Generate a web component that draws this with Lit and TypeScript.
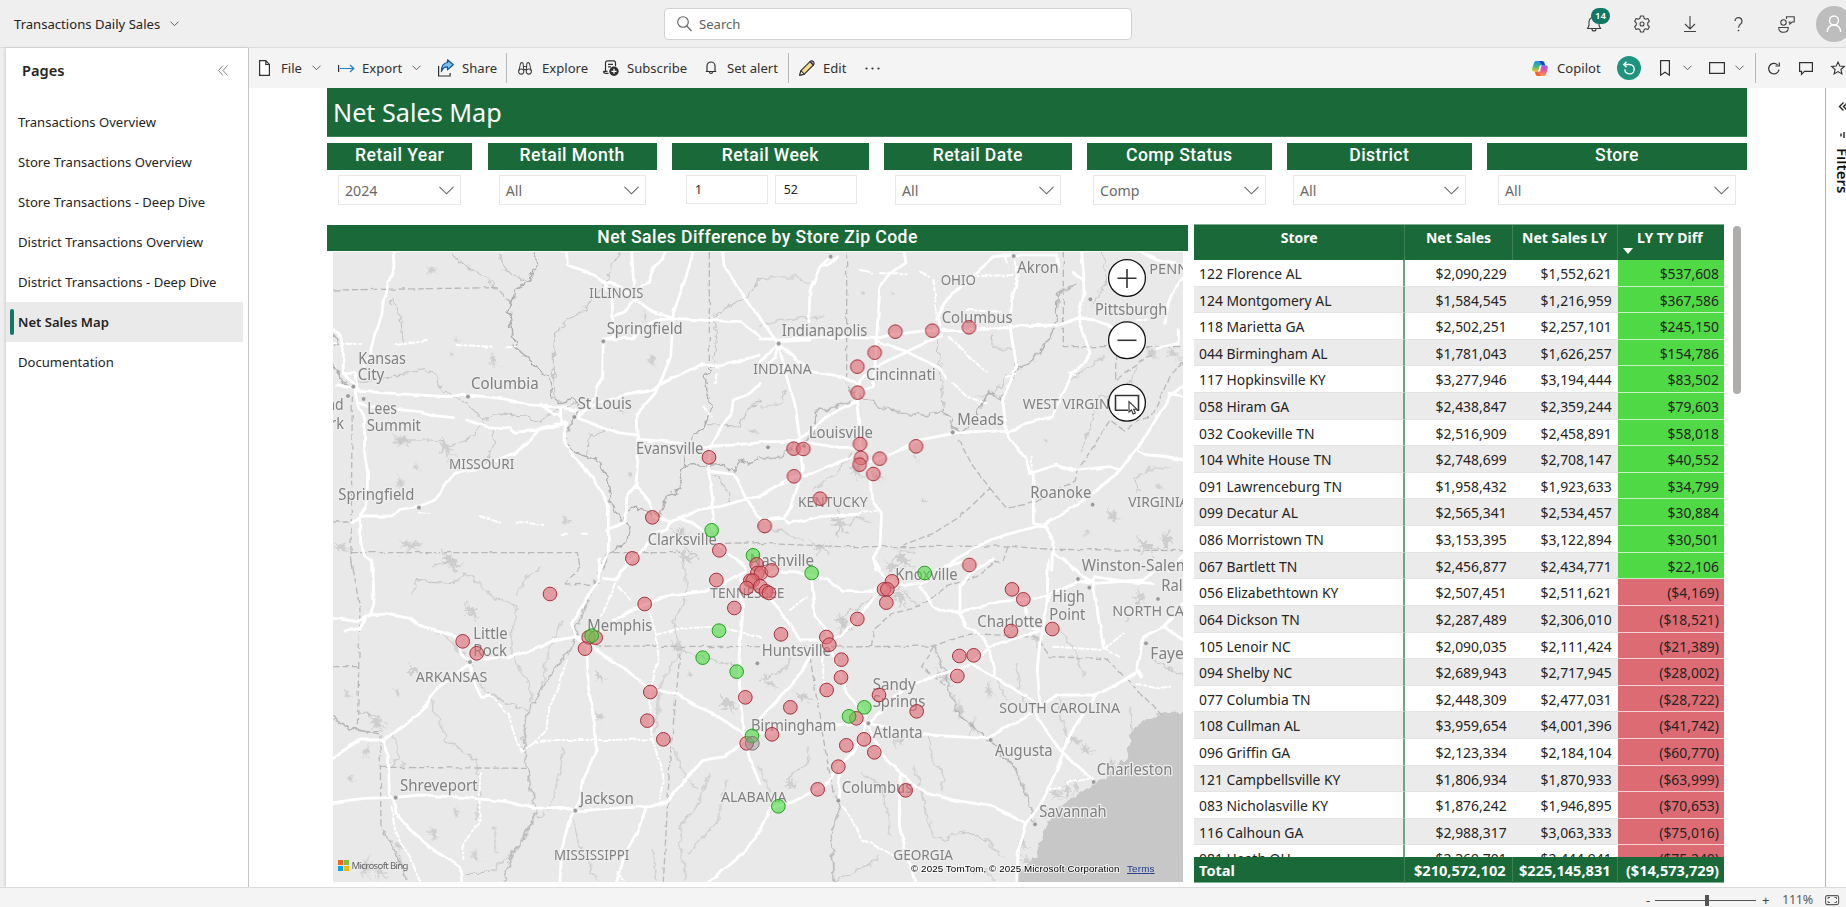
import { LitElement, html, css, svg } from "lit";
import { customElement } from "lit/decorators.js";

type Pt = [number, number];
/** text, x, baseline, rendered width, kind (c = city, s = state) */
type Label = [string, number, number, number, string];
interface Tile {
  x: number;
  y: number;
  roads: string;
  dotted: string;
  rivers: string;
  streams: string;
  borders: string;
  lakes: number[][];
  dots: Pt[];
  labels: Label[];
  red: Pt[];
  green: Pt[];
  gray?: Pt[];
}

/* Every tile is drawn on a grid three times finer than the page. */
const TILES: Tile[] = [
  {
    x: 320, y: 240,
    roads: `M220 36L222 80L205 130L190 180L185 230L165 280L155 320L150 350L105 415M40 268L62 290L70 330L70 400L100 432M70 400L105 400L112 450M50 438L100 442L130 455L270 463L380 470L430 465L500 470L560 478L620 494L700 500L770 510M105 450L115 500L134 540L134 640L143 700L140 800L122 825M730 548L660 565L625 605L580 640L520 665L460 690L405 700L370 740L345 780L300 798L240 808L215 828L130 828L95 848M122 825L122 910L135 950L158 965L160 990M660 492L700 522L722 530L722 508M722 530L722 548L740 555M120 487L150 498L230 508L300 515L345 527L400 533M440 540L500 560L570 565L580 577L640 572L700 560L740 548M740 36L742 75L800 95L850 125L875 165L878 225L880 290L850 300L848 410L830 440L825 470L780 530M850 297L935 295L960 270L1010 240L1060 235M935 36L940 110L943 180L915 215L885 228M1035 40L1000 85L985 125L940 150M850 125L900 140L945 180L1000 215L1060 235L1180 242L1260 245L1320 288M1120 40L1095 120L1060 220L1052 350L1020 430L1005 460L948 525L952 600L955 640L948 735L920 770L918 845L860 870M1208 36L1212 75L1270 170L1320 235M780 520L830 490L920 465L1000 450L1020 432L1140 375L1200 378L1260 362L1320 345M775 535L860 565L895 578L950 585L955 598L1040 605L1150 620L1240 615L1320 608M1320 430L1290 460L1240 480L1235 515L1200 570L1170 625L1165 690L1178 780L1180 870M1165 690L1240 700L1270 760L1290 800L1320 830M948 735L985 785L1000 830L1050 845L1080 835L1140 808L1200 800L1270 780L1320 768M735 545L735 610L760 650L800 690L840 750L865 800L865 930L850 970L840 990M1080 835L1120 850L1170 890L1230 945L1280 985M1050 845L1040 870L1000 880L970 930L930 965L910 990`,
    dotted: `M40 310L120 312M230 315L320 303M410 315L520 320M560 322L590 322M480 828L540 848M590 845L670 855M725 881L745 881M785 881L808 881M1188 400L1188 430M1150 500L1175 530M300 820L335 822`,
    rivers: `M645 36L650 75L625 125L585 145L580 180L568 210L570 250L585 320L640 370L685 410L695 470L720 485L760 475L775 500L765 530L740 580L740 610L770 640L830 660L865 710L870 780L905 840L930 860L920 910L880 930L850 960L840 990M1180 380L1155 400L1160 450L1172 510L1150 560L1110 600L1095 650L1090 680L1080 700L1085 750L1040 765L1020 830L960 805L930 805L905 845M1090 680L1140 675L1200 670L1240 695L1260 660L1290 670L1320 660M40 280L55 310L45 320M40 375L70 430L95 440`,
    streams: `M110 430L220 410L270 400L315 385L350 400L355 440L400 470L440 490L490 540L540 520L620 530L660 545L710 510L765 490M900 40L870 80L862 130L820 170L780 220L740 240L705 290L700 330L700 400L705 470M395 40L450 90L500 110L530 145M535 45L555 85L615 125M215 175L240 230L250 300M1320 120L1270 175L1180 230L1190 290L1180 370M490 545L455 590L400 615L330 600L230 600M520 570L520 620L490 680M880 560L805 590L800 650M1320 480L1270 530L1260 555L1150 550M1180 700L1230 760L1225 790M1080 850L1100 930L1140 960`,
    borders: `M40 150L530 143L570 185M1168 36L1168 380M97 470L93 938L100 990M92 938L772 938L780 985M40 846L95 846M880 938L1080 938M1215 910L1320 908`,
    lakes: [[335, 90, .8], [522, 362, .9], [245, 600, 1.2], [380, 625, 1.3], [290, 683, .6], [240, 730, .8], [270, 915, 1.3], [390, 960, 1.4], [740, 840, .7], [995, 360, .8], [975, 230, .7], [905, 510, .6], [1080, 880, 1.2], [1095, 950, 1.2], [1300, 575, .6], [930, 705, .4], [395, 340, .4], [412, 300, .4], [65, 920, 1]],
    dots: [[850, 304], [100, 440], [84, 468], [131, 477], [444, 470], [763, 531], [297, 803]],
    labels: [["ILLINOIS", 808, 175, 162, "s"], ["Springfield", 860, 282, 228, "c"], ["Kansas", 115, 372, 143, "c"], ["City", 113, 421, 80, "c"], ["Columbia", 453, 447, 203, "c"], ["St Louis", 773, 508, 163, "c"], ["Lees", 142, 521, 89, "c"], ["Summit", 140, 573, 163, "c"], ["Overland", -110, 511, 181, "c"], ["Park", -20, 568, 92, "c"], ["Evansville", 948, 641, 202, "c"], ["MISSOURI", 387, 687, 196, "s"], ["Springfield", 55, 781, 228, "c"], ["Clarksville", 983, 914, 207, "c"]],
    red: [[1167, 652], [997, 832], [1198, 931], [937, 955]],
    green: [[1175, 871], [1299, 946]],
  },
  {
    x: 760, y: 240,
    roads: `M212 50L180 80L150 150L147 245M230 50L205 75L185 75M0 297L60 297L200 290L350 295L400 283L500 272L620 272L720 265L760 258L900 255L955 232L1000 240L1060 260M0 235L50 305L150 300M55 310L0 365M55 310L45 350L20 375M55 310L85 430L105 490L118 590M55 310L100 350L155 395L240 408L290 430M430 36L435 70L380 110L360 140L350 290L345 380L300 420M345 380L340 440L310 450M760 45L700 50L610 130L560 180L535 230L540 265M545 285L440 335L345 385M345 300L440 335L540 385L560 415M700 50L735 44L738 66M735 44L890 45L893 80M765 60L775 110L755 180L750 260L770 380L740 450L728 480L740 580M965 36L970 90L972 160L955 230L990 340L970 370L940 400L920 440L875 530L800 550L740 580M955 232L930 245M940 100L970 120M1270 115L1240 150L1225 190L1215 250M1140 36L1200 60L1270 75M1255 265L1255 310L1190 325M0 605L118 605L160 610L240 625L300 625M118 600L200 530L290 480L300 420M290 480L300 600L330 700L335 780L365 820L360 920L340 950L350 990M300 640L220 675L160 700L100 710L0 765M330 665L400 640L480 600L580 580L710 570L740 580M118 620L128 690L95 800L70 835L0 840M70 835L85 850L180 830L300 822M740 580L800 660L810 700L890 675L940 692L1050 680L1080 690M820 700L820 850L855 858L880 900L875 990M1270 435L1230 470L1150 600L1080 690L1000 760L940 800L850 855L770 875L690 900L600 950L540 990M1135 632L1160 645L1210 648L1270 660M875 940L920 960L940 990M1230 460L1270 470M1225 990L1270 945`,
    dotted: `M580 430L620 470L680 490M570 290L620 345L680 395M520 120L525 160L530 240M300 90L340 98M360 100L440 100M480 95L510 110M590 110L760 105M620 210L720 215M305 815L350 812M1130 240L1160 240M815 650L815 700M930 400L945 405M740 410L765 405`,
    rivers: `M260 440L290 465L345 490L360 502L440 520L490 525L550 510L580 560L600 580L640 550L660 500L690 455L720 480L770 390L820 360L870 290L890 240L895 160L950 130M260 440L290 480L230 500L170 515L160 590L110 610L60 650L0 655`,
    streams: `M0 120L60 110L110 110L150 130M0 260L60 240L120 235L190 230M530 280L540 380L550 510M690 280L700 320L760 330L765 380M0 500L60 490L75 450M640 470L700 460L740 410M1030 40L1040 130L990 200M1130 380L1100 450L1020 470L1010 500L960 640M1140 760L1120 720L1160 690L1240 680M160 750L240 690L270 640M230 880L290 830L340 850M380 980L430 930L470 940M930 420L1030 350M0 880L60 870L130 905`,
    borders: `M260 36L260 430M910 36L910 320L1270 320M1067 340L1067 420L1180 340M0 910L250 920L420 920L740 918L870 928L1270 932M595 600L640 680L690 745L600 830L520 880L430 915M690 745L740 805L830 785L860 760M1270 370L1240 390L1220 430L1180 520L1090 570L1050 540L1000 620L960 680L945 720L830 785M740 920L725 970L690 960`,
    lakes: [[308, 158, .4], [400, 160, .3], [290, 690, 1.1], [350, 710, 1], [470, 650, .6], [240, 850, 1.5], [180, 920, 1.2], [1060, 825, 1], [1160, 920, 1.4], [1220, 900, 1.2], [1240, 340, 1], [1175, 340, .8], [430, 960, 1.4], [400, 980, 1], [490, 780, .4], [980, 880, .5], [855, 605, .4], [1200, 740, .5]],
    dots: [[212, 50], [761, 48], [991, 178], [56, 311], [132, 618], [578, 577], [998, 794], [24, 622]],
    labels: [["OHIO", 542, 135, 106, "s"], ["Akron", 772, 98, 124, "c"], ["Columbus", 545, 248, 213, "c"], ["PENNSYLVANIA", 1168, 102, 315, "s"], ["Pittsburgh", 1005, 225, 217, "c"], ["Indianapolis", 65, 288, 257, "c"], ["INDIANA", -20, 402, 175, "s"], ["Cincinnati", 318, 421, 209, "c"], ["WEST VIRGINIA", 788, 507, 302, "s"], ["Louisville", 146, 594, 193, "c"], ["Meads", 592, 554, 140, "c"], ["KENTUCKY", 114, 801, 209, "s"], ["Roanoke", 811, 773, 183, "c"], ["VIRGINIA", 1105, 801, 180, "s"], ["Nashville", -31, 979, 193, "c"], ["Winston-Salem", 965, 994, 325, "c"]],
    red: [[406, 275], [517, 272], [627, 262], [344, 338], [292, 380], [293, 458], [101, 626], [130, 627], [300, 612], [303, 654], [299, 674], [359, 656], [340, 702], [468, 619], [102, 709], [180, 776], [14, 858], [628, 975]],
    green: [],
  },
  {
    x: 320, y: 560,
    roads: `M158 0L162 130L152 165L200 162L270 175L300 200L360 215L405 230L430 290L450 305M40 175L85 180L110 185L152 165M75 213L120 205L135 180M450 300L500 295L570 290L640 270L700 243L770 230L800 240M450 310L370 370L330 410L320 440L250 500L190 540L120 540L80 565L40 595M190 545L205 590L208 700L225 720M40 728L130 715L225 712L300 705L430 712L560 725L640 745L730 742L766 755L860 745L990 740L1040 725L1090 665L1150 600L1215 590L1250 560L1280 530M225 720L228 760L270 810L340 870L420 920L425 965M450 320L465 375L485 410L510 405M840 0L835 60L790 130L755 190L765 230L800 260L805 380L825 500L828 570L790 660L780 720L745 790L725 870L720 965M800 240L900 170L960 140L1050 105L1150 95L1210 70L1280 30M850 55L890 60L915 20L920 0M800 250L850 285L920 330L985 385L1080 405L1120 435L1180 460L1240 500L1280 530M1262 40L1268 160L1255 320L1270 520L1290 600L1320 670M980 740L950 820L920 870L890 965M1320 810L1270 880L1170 965`,
    dotted: `M895 80L930 120M740 300L710 400L685 440L680 510L640 550M885 70L850 160L820 210M990 160L1010 230L1015 290L990 400L995 530L1030 650L1020 720M1010 225L1080 205L1190 200L1320 230M215 740L235 840L270 890L300 965M480 640L478 790L430 850L430 900M510 405L565 460L585 530L605 575L640 550L700 540L860 540L1000 538M895 935L910 965`,
    rivers: `M860 0L830 60L800 130L770 200L760 260L700 330L650 410L625 450L610 530L620 620L640 720L650 760L600 850L570 890L550 965M190 810L230 880L260 960M40 470L60 490L110 510L180 520`,
    streams: `M300 195L380 230L450 310L480 380L560 430L620 450M275 100L290 65L400 70L440 40L520 110L590 140L575 230L580 290L630 380L630 420M330 415L355 480L380 540L470 600L478 680L470 780M215 525L235 590L210 620M1090 0L1100 100L1060 190L1080 270L1180 300L1250 320M1075 280L1020 380L1015 480L1000 520M1060 560L1090 640L1130 690M1170 640L1130 740L1080 800L1080 870L1100 960M755 780L780 860L830 960M730 560L720 640L690 740L650 780M590 110L620 50L660 25M730 180L690 260L660 400M430 940L510 940L570 880M520 800L530 880M115 455L170 470L200 490M1050 260L1080 270M1220 660L1190 790L1100 880M340 20L400 0M1000 870L1010 960`,
    borders: `M95 0L120 150L112 510L180 522L183 810M183 622L620 625M40 320L115 320M735 75L835 72M735 75L780 20M800 258L1320 260M1080 280L1050 600L1030 965`,
    lakes: [[455, 155, 1.1], [285, 330, 1], [170, 490, 1.1], [140, 572, .8], [230, 400, .5], [83, 400, .6], [840, 350, .9], [840, 470, .7], [1225, 430, 1.3], [95, 655, .6], [410, 755, .6], [240, 860, .7], [140, 920, 1.2], [180, 940, 1], [340, 820, .8], [470, 890, .8], [1070, 260, .9], [400, 5, 1], [1110, 340, .5], [250, 610, .4]],
    dots: [[450, 306], [227, 713], [766, 752], [1312, 310]],
    labels: [["Memphis", 802, 213, 195, "c"], ["Little", 460, 236, 103, "c"], ["Rock", 460, 287, 101, "c"], ["ARKANSAS", 287, 367, 215, "s"], ["Shreveport", 240, 692, 233, "c"], ["Jackson", 780, 732, 162, "c"], ["MISSISSIPPI", 702, 900, 226, "s"], ["ALABAMA", 1203, 726, 197, "s"], ["Birmingham", 1293, 512, 256, "c"], ["TENNESSEE", 1171, 115, 222, "s"]],
    red: [[690, 102], [428, 244], [470, 280], [974, 132], [1189, 60], [1243, 144], [806, 232], [827, 233], [795, 266], [991, 396], [982, 482], [1030, 538], [1276, 412], [1280, 550]],
    green: [[815, 227], [1197, 212], [1148, 293], [1250, 335], [1296, 528]],
    gray: [[1297, 550]],
  },
  {
    x: 760, y: 560,
    roads: `M0 60L40 35L100 35L150 45L200 60L250 95L340 95L370 70L440 75L500 65M155 60L165 170L200 210L205 240M0 80L60 150L120 240L200 240M400 60L340 110L290 180L240 230L200 240L230 310L260 400L320 470M345 0L370 50L400 70M480 80L520 140L560 155L600 155L720 125L830 115L950 70L1000 60M530 30L620 0M600 155L600 80L640 30L700 0M600 160L620 200L670 230L690 280L705 345M325 490L420 395L520 350L620 320L700 255L830 215L850 180L870 100L960 65L1000 70L1150 60L1200 20M640 315L720 360L830 430L830 470L900 570L1000 660M865 0L860 150L840 240L832 330L840 440M325 490L420 510L500 525L680 535L800 470L890 405L1010 405L1130 340L1150 230L1210 200L1270 130M325 490L230 495L0 520M0 475L100 370L150 290M1145 350L1130 325M1010 405L930 520L890 630L840 740L800 790L775 870L770 965M325 500L370 590L430 650L500 700L580 720L700 740L800 790M420 650L418 800L440 880L465 965M320 490L280 580L230 620L205 670L100 725L30 745L0 810M240 620L235 720M915 0L960 40L1000 70L1015 170L1030 260M1000 50L1100 65L1180 70M1210 200L1270 240M790 130L810 200M820 205L865 225`,
    dotted: `M1130 370L1190 385L1230 380M860 695L900 680M920 668L1000 655M250 740L310 840L400 885M880 260L1030 270L1090 220M190 250L190 400M1030 265L1075 290M90 150L140 110`,
    rivers: `M520 260L555 330L570 390L600 470L650 510L690 540L770 630L810 740L825 790M240 740L215 820L220 965`,
    streams: `M400 510L410 570M460 620L490 720L520 830L560 840L600 815L680 840L730 900M310 640L370 690L390 830M770 310L780 410L800 430M900 210L950 280L970 350M1100 590L1120 500L1110 440M240 230L250 170L310 130L420 80M430 90L470 130M1180 300L1270 350M220 965L350 900L360 880M600 935L680 930L705 960M900 400L900 470L930 540M0 620L30 700M80 660L150 600L140 560M0 360L60 340L90 300M500 520L520 600L550 640L545 690M1150 110L1100 180M700 340L740 420`,
    borders: `M120 262L520 258L600 230L660 222L830 232L870 290L1040 296L1210 470M150 290L180 480L220 700L240 740M520 260L485 320L560 380M335 260L340 210L400 160L480 140L560 80L650 50L700 10`,
    lakes: [[555, 350, 1.2], [640, 500, .9], [600, 450, 1], [690, 390, .9], [420, 110, 1.2], [830, 240, .8], [940, 540, 1], [980, 565, .9], [130, 410, 1], [90, 670, .9], [30, 370, .9], [250, 190, 1.2], [890, 700, 1], [920, 690, .9], [800, 900, .9], [790, 850, .8], [950, 680, .8], [1140, 110, .9], [370, 690, .6], [420, 540, .6], [860, 760, .8], [1060, 610, .7]],
    dots: [[954, 57], [988, 83], [1194, 117], [1158, 250], [692, 540], [1001, 666], [825, 793], [235, 722], [325, 490]],
    labels: [["Knoxville", 406, 60, 187, "c"], ["Huntsville", 5, 287, 208, "c"], ["High", 876, 126, 99, "c"], ["Point", 868, 180, 108, "c"], ["Raleigh", 1204, 93, 155, "c"], ["NORTH CAROLINA", 1057, 167, 373, "s"], ["Charlotte", 652, 200, 196, "c"], ["Fayetteville", 1171, 296, 245, "c"], ["Sandy", 338, 390, 129, "c"], ["Springs", 338, 440, 158, "c"], ["SOUTH CAROLINA", 718, 459, 362, "s"], ["Atlanta", 339, 533, 149, "c"], ["Augusta", 705, 589, 173, "c"], ["Charleston", 1010, 645, 227, "c"], ["Columbus", 245, 699, 212, "c"], ["Savannah", 838, 772, 202, "c"], ["GEORGIA", 400, 900, 179, "s"]],
    red: [[63, 223], [199, 231], [208, 254], [244, 299], [243, 352], [200, 390], [91, 442], [36, 523], [396, 64], [372, 88], [382, 88], [379, 128], [292, 177], [756, 88], [790, 118], [753, 213], [877, 207], [598, 288], [641, 286], [592, 348], [357, 405], [470, 454], [289, 475], [312, 538], [343, 577], [259, 556], [235, 620], [173, 688], [437, 691], [-10, 13], [-8, 39], [3, 39], [35, 31], [-29, 62], [-22, 62], [-40, 84], [1, 79], [18, 94], [27, 99]],
    green: [[155, 39], [494, 39], [313, 442], [267, 469], [55, 739]],
  },
];

const BLOT = "M-20 -7L-10 -3L-4 -12L-1 -4L10 -9L6 -1L20 1L9 4L14 12L3 4L-4 14L-5 3L-18 7L-9 0ZM-20 -7L-28 -14M14 12L24 15M-4 14L-8 20M20 1L29 -4";

@customElement("sales-map")
class SalesMap extends LitElement {
  static styles = css`
    :host { display: block; overflow: hidden; background: #e9e9e9; }
    svg { display: block; }
    text { font-family: "Noto Sans", "Open Sans", sans-serif; }
    .road { fill: none; stroke: #fff; stroke-width: 8.5; stroke-linejoin: round; stroke-linecap: round; }
    .dotted { fill: none; stroke: #fff; stroke-width: 6; stroke-dasharray: 16 8 5 9; stroke-linecap: round; }
    .river { fill: none; stroke: #aeaeae; stroke-width: 4.2; stroke-linejoin: round; }
    .stream { fill: none; stroke: #c6c6c6; stroke-width: 3.4; stroke-linejoin: round; }
    .border { fill: none; stroke: #bbb9b7; stroke-width: 4; stroke-dasharray: 19 9; }
    .lake { fill: #cecece; stroke: #cbcbcb; stroke-width: 2; }
    .dot { fill: #999; stroke: #f4f4f4; stroke-width: 2; }
    .c, .s { fill: #818181; stroke: #ededed; stroke-width: 8; paint-order: stroke; stroke-linejoin: round; }
    .c { font-size: 46px; }
    .s { font-size: 41px; }
    .red { fill: #dd6b73; fill-opacity: .62; stroke: #a5303c; stroke-width: 3; }
    .green { fill: #4fd944; fill-opacity: .62; stroke: #1fa31c; stroke-width: 3; }
    .gray { fill: #909090; fill-opacity: .45; stroke: #777; stroke-width: 3; }
    .ctl { fill: #fff; stroke: #111; stroke-width: 1.3; }
    .glyph { fill: none; stroke: #333; stroke-width: 1.6; }
    .bing { font-size: 9.6px; fill: #666; }
    .copy { font-family: "Liberation Sans", Arial, sans-serif; font-size: 9.8px; fill: #000; stroke: #fff; stroke-width: 2; stroke-opacity: .7; paint-order: stroke; }
    .terms { font-family: "Liberation Sans", Arial, sans-serif; font-size: 9.8px; fill: #243c90; text-decoration: underline; }
  `;

  private layer(draw: (t: Tile) => unknown) {
    return TILES.map((t) => svg`<g transform="translate(${t.x} ${t.y}) scale(.33333)">${draw(t)}</g>`);
  }

  private pins(points: Pt[] | undefined, kind: string) {
    return (points ?? []).map(([x, y]) => svg`<circle class=${kind} cx=${x} cy=${y} r="20.5"/>`);
  }

  render() {
    return html`<svg width="850" height="630" viewBox="333 252 850 630">
      <defs>
        <filter id="wiggle" filterUnits="userSpaceOnUse" x="333" y="252" width="850" height="630">
          <feTurbulence type="fractalNoise" baseFrequency=".13" numOctaves="2" seed="4" result="n"/>
          <feDisplacementMap in="SourceGraphic" in2="n" scale="9" xChannelSelector="R" yChannelSelector="G"/>
        </filter>
        <filter id="ripple" filterUnits="userSpaceOnUse" x="333" y="252" width="850" height="630">
          <feTurbulence type="fractalNoise" baseFrequency=".09" numOctaves="1" seed="9" result="n"/>
          <feDisplacementMap in="SourceGraphic" in2="n" scale="4" xChannelSelector="R" yChannelSelector="G"/>
        </filter>
      </defs>
      <g filter="url(#wiggle)">
        <path transform="translate(760 560) scale(.33333)" fill="#c7c7c7" d="M1290 454L1215 460L1150 480L1110 530L1100 590L1040 650L990 680L940 710L890 750L850 810L830 880L780 940L750 990L1290 990Z"/>
        ${this.layer((t) => svg`
          ${t.lakes.map(([x, y, k]) => svg`<path class="lake" transform="translate(${x} ${y}) rotate(${(x * 7) % 90}) scale(${k})" d=${BLOT}/>`)}
          <path class="stream" d=${t.streams}/><path class="river" d=${t.rivers}/>`)}
      </g>
      <g filter="url(#ripple)">
        ${this.layer((t) => svg`<path class="border" d=${t.borders}/><path class="dotted" d=${t.dotted}/><path class="road" d=${t.roads}/>`)}
      </g>
      ${this.layer((t) => svg`
        ${t.dots.map(([x, y]) => svg`<circle class="dot" cx=${x} cy=${y} r="7"/>`)}
        ${t.labels.map(([s, x, y, w, k]) => svg`<text class=${k} x=${x} y=${y} textLength=${w} lengthAdjust="spacingAndGlyphs">${s}</text>`)}`)}
      ${this.layer((t) => svg`${this.pins(t.red, "red")}${this.pins(t.green, "green")}${this.pins(t.gray, "gray")}`)}
      <circle class="ctl" cx="1127" cy="278" r="18.4"/><path class="glyph" d="M1117.5 278.3h19M1127 269v19"/>
      <circle class="ctl" cx="1127" cy="340.3" r="18.4"/><path class="glyph" d="M1117.5 340.3h19"/>
      <circle class="ctl" cx="1127" cy="402.7" r="18.4"/>
      <path class="glyph" stroke-width="1.2" d="M1128 410.3h-12.5v-14.8h23v14.8h-2"/>
      <path d="M1129 401.5v10.5l2.4-2 1.8 4 2.2-1-1.8-3.8h3.2z" fill="#fff" stroke="#333" stroke-width="1.1"/>
      <path fill="#f1641f" d="M338 860h5v5h-5z"/><path fill="#84be3b" d="M344 860h5v5h-5z"/>
      <path fill="#00a4ef" d="M338 866h5v5h-5z"/><path fill="#ffb900" d="M344 866h5v5h-5z"/>
      <text class="bing" x="351.5" y="869" textLength="57">Microsoft Bing</text>
      <text class="copy" x="911" y="872" textLength="208.5">© 2025 TomTom, © 2025 Microsoft Corporation</text>
      <text class="terms" x="1127" y="872" textLength="27.5">Terms</text>
    </svg>`;
  }
}

const ROWS: [string, string, string, string][] = [
  ["122 Florence AL", "$2,090,229", "$1,552,621", "$537,608"],
  ["124 Montgomery AL", "$1,584,545", "$1,216,959", "$367,586"],
  ["118 Marietta GA", "$2,502,251", "$2,257,101", "$245,150"],
  ["044 Birmingham AL", "$1,781,043", "$1,626,257", "$154,786"],
  ["117 Hopkinsville KY", "$3,277,946", "$3,194,444", "$83,502"],
  ["058 Hiram GA", "$2,438,847", "$2,359,244", "$79,603"],
  ["032 Cookeville TN", "$2,516,909", "$2,458,891", "$58,018"],
  ["104 White House TN", "$2,748,699", "$2,708,147", "$40,552"],
  ["091 Lawrenceburg TN", "$1,958,432", "$1,923,633", "$34,799"],
  ["099 Decatur AL", "$2,565,341", "$2,534,457", "$30,884"],
  ["086 Morristown TN", "$3,153,395", "$3,122,894", "$30,501"],
  ["067 Bartlett TN", "$2,456,877", "$2,434,771", "$22,106"],
  ["056 Elizabethtown KY", "$2,507,451", "$2,511,621", "($4,169)"],
  ["064 Dickson TN", "$2,287,489", "$2,306,010", "($18,521)"],
  ["105 Lenoir NC", "$2,090,035", "$2,111,424", "($21,389)"],
  ["094 Shelby NC", "$2,689,943", "$2,717,945", "($28,002)"],
  ["077 Columbia TN", "$2,448,309", "$2,477,031", "($28,722)"],
  ["108 Cullman AL", "$3,959,654", "$4,001,396", "($41,742)"],
  ["096 Griffin GA", "$2,123,334", "$2,184,104", "($60,770)"],
  ["121 Campbellsville KY", "$1,806,934", "$1,870,933", "($63,999)"],
  ["083 Nicholasville KY", "$1,876,242", "$1,946,895", "($70,653)"],
  ["116 Calhoun GA", "$2,988,317", "$3,063,333", "($75,016)"],
  ["081 Heath OH", "$2,369,701", "$2,444,941", "($75,240)"],
];

@customElement("sales-table")
class SalesTable extends LitElement {
  static styles = css`
    :host { display: flex; flex-direction: column; height: 659px; font-size: 13.9px; color: #252423; }
    .row { display: grid; grid-template-columns: 211.4px 107.2px 105px 106.4px; grid-template-rows: 100%; height: 26.62px; box-sizing: border-box; flex: none; line-height: 27px; }
    .row > div { box-sizing: border-box; padding: 0 6px; text-align: right; white-space: nowrap; border-bottom: 1px solid #e3e3e3; }
    .row > div:first-child { text-align: left; padding-left: 5px; border-right: 2px solid #6fa385; }
    .row:nth-child(even) > div { background: #ebebeb; }
    .row > .pos, .row:nth-child(even) > .pos { background: #4fd944; border-bottom-color: #c8f0c5; padding-right: 5px; }
    .row > .neg, .row:nth-child(even) > .neg { background: #dd6b73; border-bottom-color: #f3d0d3; padding-right: 5px; }
    .head { display: grid; grid-template-columns: 211.4px 107.2px 105px 106.4px; grid-template-rows: 100%; height: 36px; background: #1a6a39; color: #fff; font-weight: 700; font-size: 14px; text-align: center; line-height: 26px; flex: none; border-top: 1px solid #7fae92; box-sizing: border-box; }
    .head > div { position: relative; border-right: 1px solid #3c8056; white-space: nowrap; }
    .head > div:last-child { border-right: 0; padding-right: 2px; }
    .sort { position: absolute; left: 5px; bottom: 6px; border: 5px solid transparent; border-top: 6px solid #fff; border-bottom: 0; }
    .body { flex: 1; overflow: hidden; display: flex; flex-direction: column; }
    .total { background: #1a6a39; color: #fff; font-weight: 700; height: 26px; font-size: 14.6px; letter-spacing: -.02px; line-height: 26px; }
    .row.total > div { border-bottom-color: #7fae92; border-right: 1px solid #3c8056; background: #1a6a39; }
    .row.total > div:last-child { border-right: 0; padding: 0 5px 0 0; }
  `;
  render() {
    return html`
      <div class="head"><div>Store</div><div>Net Sales</div><div>Net Sales LY</div><div>LY TY Diff<span class="sort"></span></div></div>
      <div class="body">
        ${ROWS.map(([store, ty, ly, diff]) => html`<div class="row"><div>${store}</div><div>${ty}</div><div>${ly}</div><div class=${diff.startsWith("(") ? "neg" : "pos"}>${diff}</div></div>`)}
      </div>
      <div class="row total"><div>Total</div><div>$210,572,102</div><div>$225,145,831</div><div>($14,573,729)</div></div>`;
  }
}

const chev = html`<svg width="9" height="6" viewBox="0 0 9 6"><path d="M.5.7l4 4 4-4" fill="none" stroke="#605e5c"/></svg>`;
const bigChev = html`<svg class="arrow" width="15" height="9" viewBox="0 0 15 9"><path d="M.5.8l7 7 7-7" fill="none" stroke="#666" stroke-width="1.1"/></svg>`;

const PAGES = ["Transactions Overview", "Store Transactions Overview", "Store Transactions - Deep Dive", "District Transactions Overview", "District Transactions - Deep Dive", "Net Sales Map", "Documentation"];

@customElement("app-root")
class AppRoot extends LitElement {
  static styles = css`
    :host { display: flex; flex-direction: column; height: 907px; width: 1846px; overflow: hidden; background: #efefef; color: #252423; font-family: "Noto Sans", "Open Sans", sans-serif; font-size: 13.1px; }
    svg { display: block; overflow: visible; }
    .top { height: 48px; box-sizing: border-box; flex: none; display: grid; grid-template-columns: 650px 468px 1fr; grid-template-rows: 47px; padding-left: 14px; align-items: center; border-bottom: 1px solid #dcdcdc; white-space: nowrap; }
    .title { display: flex; align-items: center; gap: 10px; }
    .search { height: 32px; box-sizing: border-box; background: #fff; border: 1px solid #d1d1d1; border-radius: 4px; display: flex; align-items: center; gap: 7px; padding-left: 12px; color: #616161; margin-top: 1px; }
    .tools { display: grid; grid-template-columns: repeat(6, 48px); justify-content: end; align-items: center; justify-items: center; margin-right: -12px; margin-top: 1px; }
    .bell { position: relative; }
    .badge { position: absolute; left: 5px; top: -8px; width: 19px; height: 16px; border-radius: 8px; background: #117865; color: #fff; font-size: 9.5px; font-weight: 600; line-height: 16px; text-align: center; }
    .avatar { width: 36px; height: 36px; border-radius: 50%; background: #bdbdbd; display: grid; place-items: center; }
    .main { flex: 1; display: flex; min-height: 0; padding-left: 6px; }
    .side { width: 243px; box-sizing: border-box; background: #fff; border-right: 1px solid #c8c6c4; box-shadow: -1px 0 3px #0002; flex: none; }
    .sidehead { display: flex; justify-content: space-between; align-items: center; height: 54px; box-sizing: border-box; padding: 0 20px 10px 16px; font-weight: 600; font-size: 14.6px; }
    .page { height: 40px; width: 237px; box-sizing: border-box; padding-left: 4px; display: flex; align-items: center; }
    .page::before { content: ""; width: 4px; height: 26px; border-radius: 2px; margin-right: 4px; }
    .page.on { background: #eaeaea; font-weight: 600; }
    .page.on::before { background: #117865; }
    .content { flex: 1; min-width: 0; display: flex; flex-direction: column; background: #fff; }
    .bar { height: 40px; flex: none; background: #f4f4f4; display: flex; justify-content: space-between; padding-left: 10px; font-size: 13.1px; color: #323130; white-space: nowrap; }
    .left, .right { display: grid; align-items: center; height: 40px; }
    .left { grid-template-columns: 22px 31px 26px 24px 50px 26px 24px 44px 12px 24px 61px 24px 77.5px 22.5px 61px 11px 24px 42px 20px; }
    .right { grid-template-columns: 25px 60px 43px 23px 26px 26px 20px 13px 31px 32px 15px; }
    .sep { width: 1px; height: 30px; background: #b8b8b8; }
    .work { flex: 1; display: flex; justify-content: space-between; min-height: 0; }
    .report { width: 1420px; margin-left: 78px; display: flex; flex-direction: column; }
    .banner { height: 48.5px; box-sizing: border-box; background: #1a6a39; border-bottom: 1px solid #3c8056; color: #fff; font-size: 25.2px; line-height: 49px; padding-left: 6px; flex: none; }
    .slicers { display: grid; grid-template-columns: 160.75px 184.25px 212px 203px 200px 200px 260px; margin-top: 6.5px; height: 81px; flex: none; }
    .slicers > div:not(:last-child) { margin-right: 15.5px; }
    .caption { background: #1a6a39; color: #fff; font-family: Roboto, sans-serif; font-weight: 500; font-size: 17.6px; letter-spacing: .42px; text-align: center; height: 26.5px; line-height: 24px; }
    .drop { margin: 5.5px 11px 0; height: 30px; box-sizing: border-box; border: 1px solid #e8e8e8; display: flex; align-items: center; justify-content: space-between; padding: 0 6px 0 6px; color: #6b6967; font-size: 14.2px; }
    .wide .drop { margin: 5.5px 6px 0; }
    .range { display: flex; gap: 7px; margin: 5.5px 12px 0 14px; }
    .range div { flex: 1; height: 28.5px; box-sizing: border-box; border: 1px solid #e8e8e8; padding-left: 8px; line-height: 28px; font-size: 12.3px; }
    .visuals { display: flex; height: 659px; }
    .mapcard { width: 861px; padding-top: 1px; }
    .mapcard .caption { height: 26px; line-height: 24px; margin-bottom: 1px; }
    sales-map { width: 850px; height: 630px; margin-left: 6px; }
    sales-table { width: 530px; margin-left: 6px; }
    .thumb { width: 8px; height: 168px; border-radius: 4px; background: #b0aeac; margin: 1.5px 0 0 9px; }
    .filters { width: 20px; border-left: 1px solid #b5b3b1; overflow: hidden; display: flex; flex-direction: column; align-items: flex-start; font-weight: 600; }
    .filters svg { margin: 14px 0 0 13px; flex: none; }
    .filters svg + svg { margin-top: 19px; }
    .vert { writing-mode: vertical-rl; font-size: 15px; margin: 9px 0 0 7px; line-height: 20px; color: #111; }
    .foot { height: 20px; box-sizing: border-box; border-top: 1px solid #dcdcdc; background: #f4f4f4; flex: none; display: grid; grid-template-columns: 9px 107px 20px 43px 21px; justify-content: end; align-items: center; color: #444; padding-top: 4px; white-space: nowrap; }
    .foot span { line-height: 16px; }
    .pct { color: #605e5c; font-size: 12.6px; letter-spacing: -.3px; }
  `;

  render() {
    const slicer = (name: string, value: string, wide = false) => html`<div class=${wide ? "wide" : ""}><div class="caption">${name}</div><div class="drop"><span>${value}</span>${bigChev}</div></div>`;
    return html`
      <div class="top">
        <div class="title"><span>Transactions Daily Sales</span>${chev}</div>
        <div class="search"><svg width="15" height="16" viewBox="0 0 15 16"><circle cx="6" cy="6" r="5.3" fill="none" stroke="#616161" stroke-width="1.1"/><path d="M9.8 10l4.7 5" stroke="#616161" stroke-width="1.1"/></svg><span>Search</span></div>
        <div class="tools">
          <div class="bell"><svg width="16" height="16" viewBox="0 0 16 16"><path d="M1.5 12.5L3 9.5V6a5 5 0 0 1 10 0v3.5l1.5 3zM6 13a2 2 0 0 0 4 0" fill="none" stroke="#3b3a39" stroke-width="1.1"/></svg><div class="badge">14</div></div>
          <svg width="18" height="18" viewBox="0 0 18 18" fill="none" stroke="#424242" stroke-width="1.1" stroke-linejoin="round"><path d="M7.500 1h3l.6 2.300 1.500.9 2.300-.7 1.500 2.700L14.700 8v2l1.700 1.800-1.500 2.700-2.300-.7-1.500.9-.6 2.300h-3l-.6-2.300-1.500-.9-2.300.7-1.500-2.700L3.300 10V8L1.600 6.200l1.500-2.700 2.300.7 1.500-.9z"/><circle cx="9" cy="9" r="2"/></svg>
          <svg width="12" height="16" viewBox="0 0 12 16"><path d="M6 0v12.500M1 8l5 5 5-5M0 15.500h12" fill="none" stroke="#424242" stroke-width="1.1"/></svg>
          <svg width="9" height="15" viewBox="0 0 9 15"><path d="M1 4a3.500 3.500 0 1 1 5.800 2.700C5.200 8 4.500 8.600 4.500 10.700" fill="none" stroke="#424242" stroke-width="1.2"/><circle cx="4.500" cy="13.500" r=".85" fill="#424242"/></svg>
          <svg width="17" height="17" viewBox="0 0 17 17" fill="none" stroke="#424242" stroke-width="1.1"><circle cx="5.500" cy="6.500" r="2.700"/><path d="M.8 11.500h9.400v.8c0 2.500-2 4-4.700 4s-4.700-1.500-4.700-4zM8.500 3V.8h7.700v5.200h-2l-2.400 2v-2H10.500"/></svg>
          <div class="avatar"><svg width="16" height="18" viewBox="0 0 16 18" fill="none" stroke="#fff" stroke-width="1.400"><circle cx="8" cy="5.500" r="4.500"/><path d="M1.200 17c.5-4.500 3-7 6.800-7s6.300 2.500 6.800 7"/></svg></div>
        </div>
      </div>
      <div class="main">
        <div class="side">
          <div class="sidehead"><span>Pages</span><svg width="10" height="11" viewBox="0 0 10 11"><path d="M5 .5l-4.500 5 4.500 5M9.500.5L5 5.500l4.500 5" fill="none" stroke="#7a8590"/></svg></div>
          ${PAGES.map((p) => html`<div class=${p === "Net Sales Map" ? "page on" : "page"}>${p}</div>`)}
        </div>
        <div class="content">
          <div class="bar">
            <div class="left">
              <svg width="11" height="16" viewBox="0 0 11 16"><path d="M.6.600h6.200l3.600 3.800v11H.6zM6.800.600v3.900h3.600" fill="#fff" stroke="#323130" stroke-width="1.200"/></svg>
              <span>File</span>${chev}
              <svg width="17" height="9" viewBox="0 0 17 9" fill="none" stroke="#1b7fc4" stroke-width="1.200"><path d="M.6 1v7" stroke="#323130"/><path d="M2 4.500h13.500M12 1l3.700 3.500L12 8"/></svg>
              <span>Export</span>${chev}
              <svg width="16" height="18" viewBox="0 0 16 18"><path d="M.6 7v10h11.500v-3" fill="none" stroke="#323130" stroke-width="1.200"/><path d="M9.500.8l5.800 5-5.800 5V7.900C6.500 7.800 4.500 9.500 3.400 12.600 3.400 7.500 5.500 4 9.500 3.500z" fill="#83beec" stroke="#0f5a9a" stroke-width="1.200" stroke-linejoin="round"/></svg>
              <span>Share</span><div class="sep"></div>
              <svg width="14" height="13" viewBox="0 0 14 13" fill="none" stroke="#424242" stroke-width="1.050"><circle cx="3.200" cy="9.500" r="2.600"/><circle cx="10.800" cy="9.500" r="2.600"/><path d="M.8 9L2.400 2a1.200 1.200 0 0 1 2.800 0L5.800 9M13.200 9l-1.600-7a1.200 1.200 0 0 0-2.800 0L8.200 9M5.500 4.500h3M5.800 7.500h2.400"/></svg>
              <span>Explore</span>
              <svg width="16" height="16" viewBox="0 0 16 16"><path d="M6 13H3a2 2 0 0 1-2-2M1 11h4M3 11V2.500a2 2 0 0 1 2-2h6a2 2 0 0 1 2 2V6M5.500 4h5M5.500 6.500h3" transform="translate(-.5 .3)" fill="none" stroke="#323130" stroke-width="1.200"/><circle cx="11" cy="11.300" r="4.700" fill="#323130"/><path d="M8.500 11.300h5M11 8.800v5" stroke="#fff" stroke-width="1.200"/></svg>
              <span>Subscribe</span>
              <svg width="12" height="14" viewBox="0 0 12 14"><path d="M.8 10.500h10.400M2 10.300V5a4 4 0 0 1 8 0v5.300M4.500 11a1.500 1.500 0 0 0 3 0" fill="none" stroke="#323130" stroke-width="1.200"/></svg>
              <span>Set alert</span><div class="sep"></div>
              <svg width="16" height="16" viewBox="0 0 16 16" stroke="#323130" stroke-width="1.100" stroke-linejoin="round"><path d="M.7 15.300l1.200-4.600L11 1.600l3.400 3.400-9.100 9.100z" fill="#f7dc8b"/><path d="M11 1.600a2.400 2.400 0 0 1 3.400 3.400z" fill="#c195c9"/><path d="M1.900 10.700l3.400 3.400-4.600 1.200z" fill="#fff"/></svg>
              <span>Edit</span>
              <svg width="16" height="3" viewBox="0 0 16 3" fill="#323130"><circle cx="1.500" cy="1.500" r="1.100"/><circle cx="7.500" cy="1.500" r="1.100"/><circle cx="13.500" cy="1.500" r="1.100"/></svg>
            </div>
            <div class="right">
              <svg width="16" height="15" viewBox="0 0 16 15">
                <defs>
                  <linearGradient id="ca" x1="0" y1="0" x2="0" y2="1"><stop offset="0" stop-color="#1c8ff0"/><stop offset=".5" stop-color="#3bb98a"/><stop offset="1" stop-color="#f3c613"/></linearGradient>
                  <linearGradient id="cb" x1="0" y1="0" x2="0" y2="1"><stop offset="0" stop-color="#9a5bea"/><stop offset=".5" stop-color="#e8569b"/><stop offset="1" stop-color="#fb9a4b"/></linearGradient>
                </defs>
                <path d="M4.500 0h6L7.500 10.500H2C.3 10.500-.2 9 .4 7L2 2C2.500.6 3.200 0 4.500 0z" fill="url(#ca)"/>
                <path d="M8.500 4.500H14c1.700 0 2.200 1.500 1.600 3.500L14 13c-.5 1.400-1.200 2-2.500 2h-6z" fill="url(#cb)"/>
                <path d="M7 0h3.500c1.200 0 1.700 1 2 2l.8 2.500H10z" fill="#1648c4"/><path d="M9 15H5.500c-1.200 0-1.700-1-2-2l-.8-2.500H6z" fill="#f5622f"/>
                <path d="M7.800 4.500h1.700L8.200 10.500H6z" fill="#fff"/>
              </svg>
              <span>Copilot</span>
              <svg width="24" height="24" viewBox="0 0 24 24"><circle cx="12" cy="12" r="12" fill="#20937f"/><path d="M7 8.500h5.500a4.700 4.700 0 1 1-4.700 4.900M9.500 5.800L6.800 8.500l2.700 2.700" fill="none" stroke="#fff" stroke-width="1.400"/></svg>
              <svg width="10" height="16" viewBox="0 0 10 16"><path d="M.6.600h8.800v14.600L5 12.200.6 15.200z" fill="none" stroke="#323130" stroke-width="1.200"/></svg>
              ${chev}
              <svg width="16" height="12" viewBox="0 0 16 12"><path d="M.6.600h14.800v10.800H.6z" fill="none" stroke="#323130" stroke-width="1.200"/></svg>
              ${chev}<div class="sep"></div>
              <svg width="12" height="13" viewBox="0 0 12 13"><path d="M11 7.500A5.200 5.200 0 1 1 9.500 2.900M11.300.5V4H7.500" fill="none" stroke="#323130" stroke-width="1.200"/></svg>
              <svg width="14" height="13" viewBox="0 0 14 13"><path d="M.6.600h12.800v8.800H5.500L2.500 12.400v-3H.6z" fill="none" stroke="#323130" stroke-width="1.200"/></svg>
              <svg width="14" height="14" viewBox="0 0 14 14"><path d="M7 1l1.800 4.100 4.500.4-3.400 3 1 4.400L7 10.600l-3.900 2.300 1-4.400-3.400-3 4.500-.4z" fill="none" stroke="#323130" stroke-width="1.100"/></svg>
            </div>
          </div>
          <div class="work">
            <div class="report">
              <div class="banner">Net Sales Map</div>
              <div class="slicers">
                ${slicer("Retail Year", "2024")}
                ${slicer("Retail Month", "All")}
                <div><div class="caption">Retail Week</div><div class="range"><div>1</div><div>52</div></div></div>
                ${slicer("Retail Date", "All")}
                ${slicer("Comp Status", "Comp", true)}
                ${slicer("District", "All", true)}
                ${slicer("Store", "All")}
              </div>
              <div class="visuals">
                <div class="mapcard"><div class="caption">Net Sales Difference by Store Zip Code</div><sales-map></sales-map></div>
                <sales-table></sales-table>
                <div class="thumb"></div>
              </div>
            </div>
            <div class="filters">
              <svg width="10" height="9" viewBox="0 0 10 9"><path d="M4.500.5l-4 4 4 4M8.500.5l-4 4 4 4" fill="none" stroke="#252423" stroke-width="1.400"/></svg>
              <svg width="10" height="9" viewBox="0 0 10 9"><path d="M2 6.500v-3M5 8V2" fill="none" stroke="#252423" stroke-width="1.400"/></svg>
              <div class="vert">Filters</div>
            </div>
          </div>
        </div>
      </div>
      <div class="foot">
        <span>-</span>
        <svg width="101" height="12" viewBox="0 0 101 12"><path d="M0 6.500h101" stroke="#555"/><path d="M50 1h4v11h-4z" fill="#555"/></svg>
        <span>+</span><span class="pct">111%</span>
        <svg width="15" height="10" viewBox="0 0 15 10"><rect x=".6" y=".6" width="13" height="9" rx="1.500" fill="none" stroke="#605e5c" stroke-width="1.100"/><path d="M3 4V2.500h2M9.500 2.500h2V4M11.500 6v1.500h-2M5 7.500H3V6" fill="none" stroke="#605e5c"/></svg>
      </div>`;
  }
}
